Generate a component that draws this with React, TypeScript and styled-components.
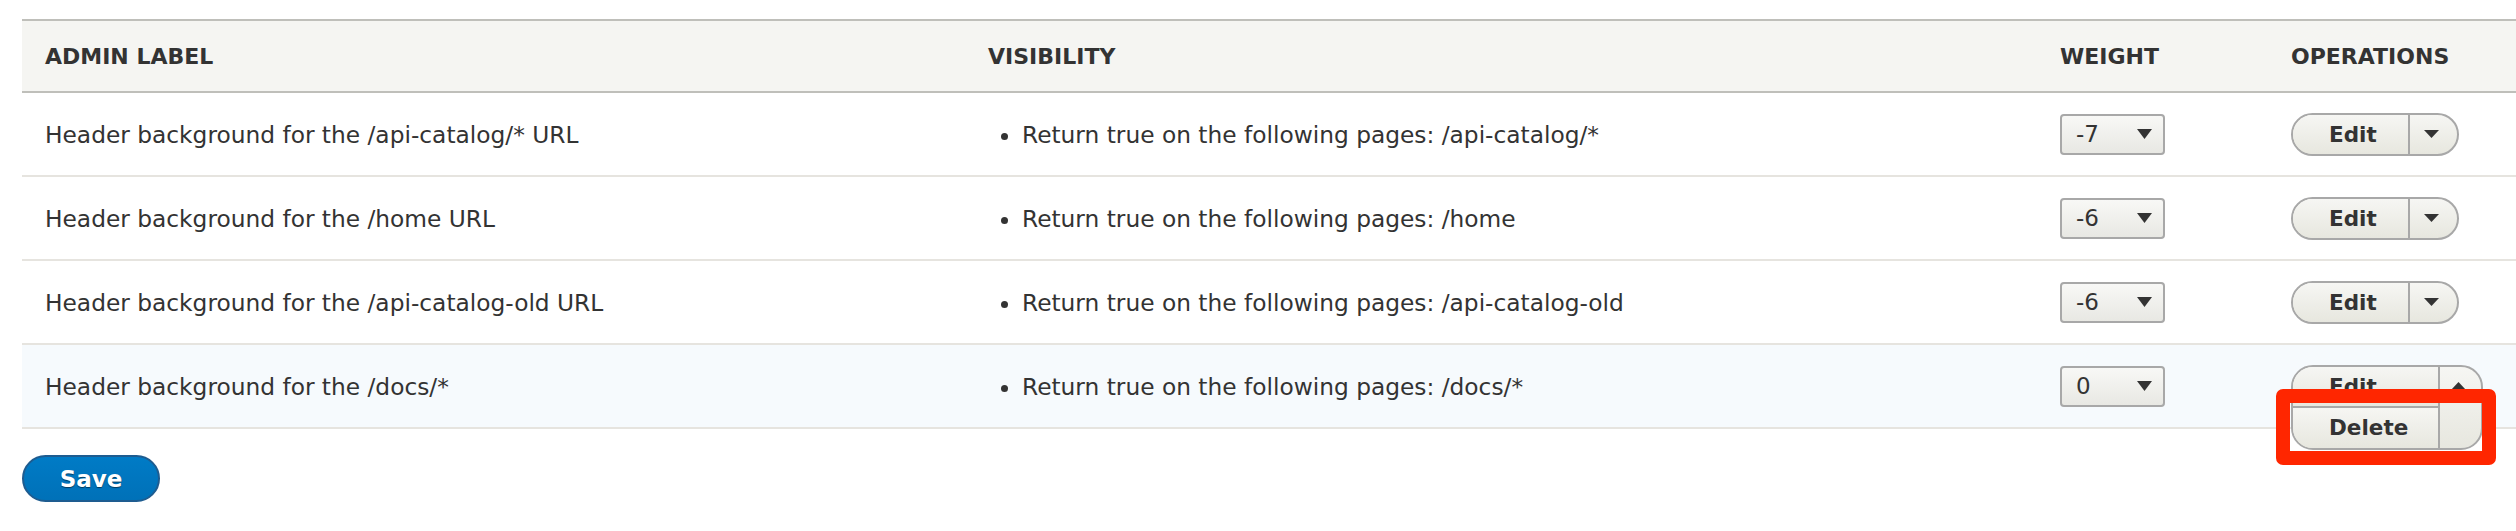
import React from "react";
import styled, { createGlobalStyle, css } from "styled-components";

const Global = createGlobalStyle`
  html, body { margin: 0; padding: 0; background: #ffffff; }
  body {
    font-family: "DejaVu Sans", "Liberation Sans", sans-serif;
    color: #333333;
  }
  * { box-sizing: border-box; }
`;

const Page = styled.div`
  padding: 19px 0 0 22px;
  width: 2516px;
`;

const Table = styled.div`
  display: grid;
  grid-template-columns: 943px 1072px 231px 1fr;
`;

const HeadRow = styled.div`
  display: contents;
`;

const HeadCell = styled.div`
  background: #f5f5f2;
  border-top: 2px solid #bfbfba;
  border-bottom: 2px solid #bfbfba;
  height: 74px;
  padding: 0 0 0 23px;
  display: flex;
  align-items: center;
  font-size: 22px;
  font-weight: bold;
  text-transform: uppercase;
  color: #333333;
`;

const Row = styled.div`
  display: contents;
`;

const Cell = styled.div<{ $active?: boolean }>`
  background: ${(p) => (p.$active ? "#f6fafd" : "#ffffff")};
  border-bottom: 2px solid #e6e4df;
  height: 84px;
  padding: 0 0 0 23px;
  display: flex;
  align-items: center;
  font-size: 23.3px;
  color: #333333;
`;

const Conditions = styled.ul`
  margin: 0;
  padding: 0 0 0 34px;
  list-style: disc;
`;

const Condition = styled.li`
  font-size: 23.3px;
`;

const Select = styled.div`
  width: 105px;
  height: 41px;
  border: 2px solid #a8a8a8;
  border-radius: 4px;
  background: linear-gradient(#f8f8f6, #e8e8e3);
  display: flex;
  align-items: center;
  justify-content: space-between;
  padding: 0 11px 0 14px;
  font-size: 23px;
  color: #333;
`;

const SelectArrow = () => (
  <svg width="15" height="10" viewBox="0 0 15 10">
    <polygon points="0,0 15,0 7.5,10" fill="#333" />
  </svg>
);

const DropWrap = styled.div`
  position: relative;
  height: 43px;
  width: 168px;
`;

const Drop = styled.div<{ $open?: boolean }>`
  display: flex;
  border: 2px solid #a8a8a8;
  border-radius: 22px;
  background: linear-gradient(#f6f6f3, #e7e7df);
  overflow: hidden;
  ${(p) =>
    p.$open
      ? css`
          position: absolute;
          left: 0;
          top: 0;
          width: 192px;
          height: 85px;
          z-index: 2;
        `
      : css`
          height: 43px;
          width: 168px;
        `}
`;

const Items = styled.div`
  flex: 1;
  display: flex;
  flex-direction: column;
`;

const Item = styled.div<{ $sep?: boolean }>`
  flex: 1;
  display: flex;
  align-items: center;
  padding-left: 36px;
  font-size: 21.5px;
  font-weight: bold;
  color: #333;
  background: linear-gradient(#f6f6f3, #e7e7df);
  ${(p) => p.$sep && css`border-top: 2px solid #a8a8a8;`}
`;

const Toggle = styled.div<{ $w: number }>`
  width: ${(p) => p.$w}px;
  border-left: 2px solid #a8a8a8;
  display: flex;
  justify-content: center;
`;

const ToggleInner = styled.div<{ $open?: boolean }>`
  height: ${(p) => (p.$open ? "39px" : "100%")};
  display: flex;
  align-items: center;
  padding-right: 4px;
`;

const Caret = ({ up }: { up?: boolean }) => (
  <svg width="15" height="8" viewBox="0 0 15 8">
    {up ? (
      <polygon points="0,8 15,8 7.5,0" fill="#333" />
    ) : (
      <polygon points="0,0 15,0 7.5,8" fill="#333" />
    )}
  </svg>
);

const Highlight = styled.div`
  position: absolute;
  left: -15px;
  top: 24px;
  width: 220px;
  height: 76px;
  border: 14px solid #ff2600;
  border-radius: 7px;
  z-index: 3;
  pointer-events: none;
`;

const Actions = styled.div`
  padding-top: 26px;
`;

const SaveButton = styled.button`
  width: 138px;
  height: 47px;
  border: 2px solid #1e5c90;
  border-radius: 24px;
  background: linear-gradient(#007bc6, #0071b8);
  color: #ffffff;
  font-family: "DejaVu Sans", "Liberation Sans", sans-serif;
  font-size: 23px;
  font-weight: bold;
  text-shadow: 0 1px 1px rgba(0, 0, 0, 0.5);
  padding: 0;
  cursor: pointer;
`;

type Block = { label: string; path: string; weight: string };

const blocks: Block[] = [
  { label: "Header background for the /api-catalog/* URL", path: "/api-catalog/*", weight: "-7" },
  { label: "Header background for the /home URL", path: "/home", weight: "-6" },
  { label: "Header background for the /api-catalog-old URL", path: "/api-catalog-old", weight: "-6" },
  { label: "Header background for the /docs/*", path: "/docs/*", weight: "0" },
];

const Dropbutton = ({ open }: { open?: boolean }) => (
  <DropWrap>
    {open ? (
      <>
        <Drop $open>
          <Items>
            <Item>Edit</Item>
            <Item $sep>Delete</Item>
          </Items>
          <Toggle $w={43}>
            <ToggleInner $open>
              <Caret up />
            </ToggleInner>
          </Toggle>
        </Drop>
        <Highlight />
      </>
    ) : (
      <Drop>
        <Items>
          <Item>Edit</Item>
        </Items>
        <Toggle $w={49}>
          <ToggleInner>
            <Caret />
          </ToggleInner>
        </Toggle>
      </Drop>
    )}
  </DropWrap>
);

export default function App() {
  return (
    <>
      <Global />
      <Page>
        <Table>
          <HeadRow>
            <HeadCell>Admin label</HeadCell>
            <HeadCell>Visibility</HeadCell>
            <HeadCell>Weight</HeadCell>
            <HeadCell>Operations</HeadCell>
          </HeadRow>
          {blocks.map((b, i) => {
            const active = i === blocks.length - 1;
            return (
              <Row key={i}>
                <Cell $active={active}>{b.label}</Cell>
                <Cell $active={active}>
                  <Conditions>
                    <Condition>Return true on the following pages: {b.path}</Condition>
                  </Conditions>
                </Cell>
                <Cell $active={active}>
                  <Select>
                    <span>{b.weight}</span>
                    <SelectArrow />
                  </Select>
                </Cell>
                <Cell $active={active}>
                  <Dropbutton open={active} />
                </Cell>
              </Row>
            );
          })}
        </Table>
        <Actions>
          <SaveButton>Save</SaveButton>
        </Actions>
      </Page>
    </>
  );
}
